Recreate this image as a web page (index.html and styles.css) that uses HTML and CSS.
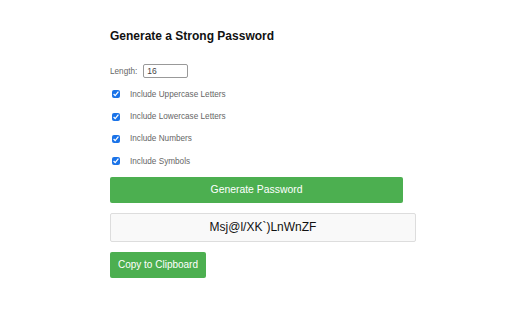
FILE: index.html
```html
<!DOCTYPE html>
<html>
<head>
<meta charset="utf-8">
<link rel="stylesheet" href="styles.css">
</head>
<body>
<div class="app">
  <h1 class="title">Generate a Strong Password</h1>
  <div class="length-row">
    <label class="label" for="len">Length:</label>
    <input class="len-input" id="len" type="number" value="16">
  </div>
  <label class="opt"><input type="checkbox" class="cb" checked><span>Include Uppercase Letters</span></label>
  <label class="opt"><input type="checkbox" class="cb" checked><span>Include Lowercase Letters</span></label>
  <label class="opt"><input type="checkbox" class="cb" checked><span>Include Numbers</span></label>
  <label class="opt"><input type="checkbox" class="cb" checked><span>Include Symbols</span></label>
  <button class="btn btn-wide">Generate Password</button>
  <div class="output">Msj@l/XK`)LnWnZF</div>
  <button class="btn btn-copy">Copy to Clipboard</button>
</div>
</body>
</html>
```

FILE: styles.css
```css
html, body {
  margin: 0;
  padding: 0;
  background: #ffffff;
}
body {
  font-family: "Liberation Sans", Arial, sans-serif;
}
.app {
  width: 306px;
  margin-left: 110px;
  padding-top: 29px;
  display: flex;
  flex-direction: column;
  align-items: flex-start;
}
.title {
  margin: 0;
  font-size: 12px;
  line-height: 14px;
  font-weight: bold;
  color: #111;
}
.length-row {
  margin-top: 21px;
  display: flex;
  align-items: center;
  height: 14px;
}
.label {
  font-size: 8.2px;
  color: #666;
  margin-right: 6px;
}
.len-input {
  width: 45px;
  height: 14px;
  box-sizing: border-box;
  border: 1px solid #999;
  border-radius: 2px;
  padding: 0 0 0 3px;
  margin: 0;
  font-family: "Liberation Sans", Arial, sans-serif;
  font-size: 8.5px;
  color: #444;
  -moz-appearance: textfield;
}
.len-input::-webkit-inner-spin-button,
.len-input::-webkit-outer-spin-button {
  -webkit-appearance: none;
  margin: 0;
}
.opt {
  display: flex;
  align-items: center;
  height: 22.4px;
  font-size: 8.2px;
  color: #666;
}
.length-row + .opt {
  margin-top: 5px;
}
.cb {
  width: 8px;
  height: 8px;
  margin: 0 10px 0 2px;
  accent-color: #1a73e8;
}
.btn {
  border: none;
  background: #4caf50;
  color: #fff;
  font-family: "Liberation Sans", Arial, sans-serif;
  border-radius: 2px;
  padding: 0;
  cursor: pointer;
}
.btn-wide {
  margin-top: 4px;
  width: 293px;
  height: 26px;
  font-size: 10.4px;
}
.output {
  margin-top: 10px;
  width: 306px;
  height: 29px;
  box-sizing: border-box;
  border: 1px solid #ddd;
  border-radius: 2px;
  background: #f9f9f9;
  display: flex;
  align-items: center;
  justify-content: center;
  font-size: 12px;
  color: #111;
}
.btn-copy {
  margin-top: 10px;
  width: 96px;
  height: 26px;
  font-size: 10px;
}
```
